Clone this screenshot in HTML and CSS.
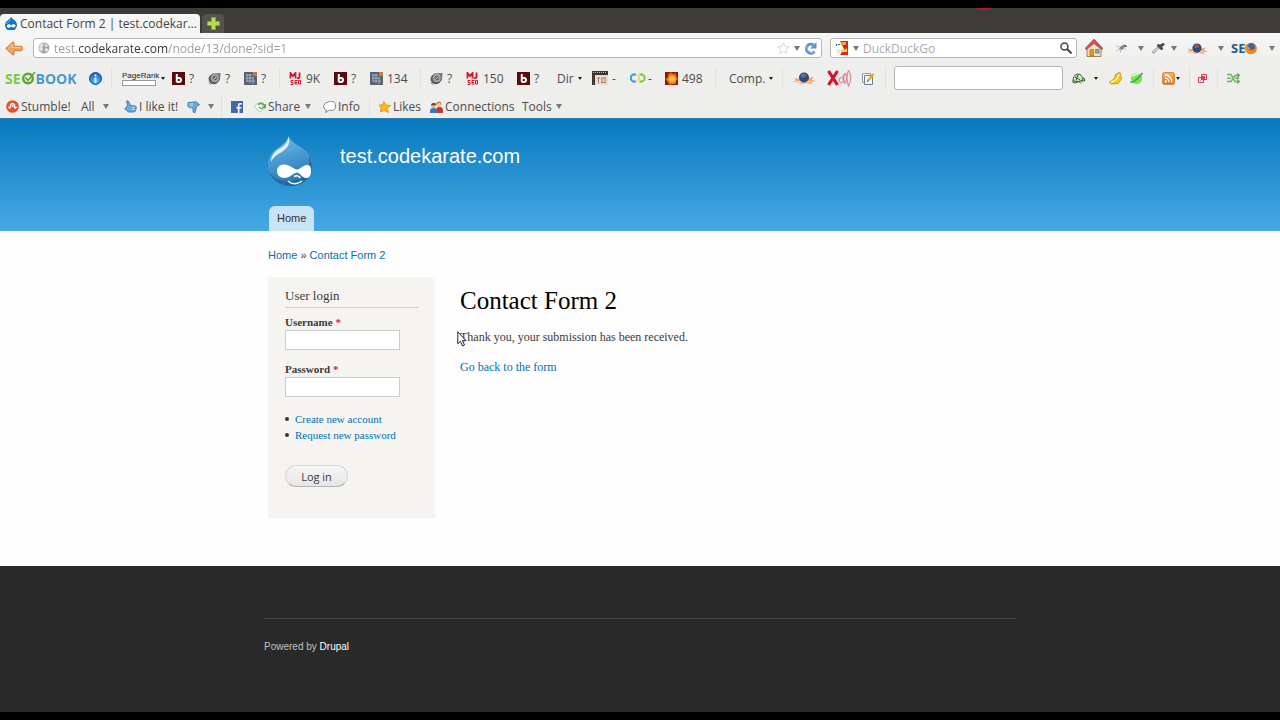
FILE: index.html
```html
<!DOCTYPE html>
<html lang="en">

<head>
    <meta charset="utf-8">
    <title>Contact Form 2 | test.codekarate.com</title>
    <meta name="viewport" content="width=device-width, initial-scale=1.0">
    <link rel="stylesheet" href="styles.css">
</head>

<body>
    <!-- shared icons -->
    <svg class="sprite" width="0" height="0" aria-hidden="true">
        <defs>
            <linearGradient id="dropFill" x1="0" y1="0" x2="0.3" y2="1">
                <stop offset="0" stop-color="#7fbfe9"/>
                <stop offset="0.5" stop-color="#4a9bd2"/>
                <stop offset="1" stop-color="#2a78b0"/>
            </linearGradient>
            <radialGradient id="infoFill" cx="0.5" cy="0.7" r="0.7">
                <stop offset="0" stop-color="#5fc0ff"/>
                <stop offset="1" stop-color="#1259c4"/>
            </radialGradient>
            <linearGradient id="orangeFill" x1="0" y1="0" x2="0" y2="1">
                <stop offset="0" stop-color="#f9b56b"/>
                <stop offset="1" stop-color="#df6a10"/>
            </linearGradient>
            <radialGradient id="sunFill" cx="0.55" cy="0.55" r="0.6">
                <stop offset="0" stop-color="#ffd84a"/>
                <stop offset="0.5" stop-color="#f0801a"/>
                <stop offset="1" stop-color="#c8300c"/>
            </radialGradient>
        </defs>
        <symbol id="b" viewBox="0 0 13 13">
            <rect width="13" height="13" fill="#5c0a0c"/>
            <path d="M4.800 2v8.200M4.800 6h2.200a2 2 0 0 1 0 4H4.800" fill="none" stroke="#fff" stroke-width="2"/>
        </symbol>
        <symbol id="sphere" viewBox="0 0 13 13">
            <path d="M4 1.500 12.500 1 12 8 9 11z" fill="#777"/>
            <circle cx="5.800" cy="7" r="5.300" fill="#5f5f5f"/>
            <circle cx="6.800" cy="6" r="4" fill="#a5a5a5"/>
            <circle cx="6.800" cy="6" r="2.300" fill="#666"/>
            <path d="M5.500 7.500 8.500 4.500" stroke="#ccc"/>
            <path d="M.500 10.500 3 12.500" stroke="#888"/>
        </symbol>
        <symbol id="grid" viewBox="0 0 13 13">
            <rect width="13" height="13" fill="#5a6470"/>
            <rect x="9" width="4" height="4" fill="#d9743a"/>
            <path d="M2 3h6M2 6h8M3 9h8M3 2v8M6 2v9M9 5v7" stroke="#a9c3d6" stroke-width=".8"/>
        </symbol>
        <symbol id="mj" viewBox="0 0 13 13">
            <path d="M1.500 6.500V1l2.500 3L6.500 1v5.500M10.500 .500v4.500q0 1.500-2.500 1" fill="none" stroke="#d0142c" stroke-width="1.800"/>
            <path d="M4.500 8.500H2v2h2v2H1.500M8.500 8.500H6v3.500h2.500M6 10.500h2M9.500 8.500h2v3.500h-2z" fill="none" stroke="#d0142c" stroke-width="1"/>
        </symbol>
        <symbol id="rocket" viewBox="0 0 24 14">
            <path d="M0 11 4 9.500 2 7 7 8 8 4h8l1 3 5-1-3 3 5 1-5 1 1 2-6-1-6 1 1-2-4 1 0-1.500z" fill="#f5a066"/>
            <path d="M4 10.500h15" stroke="#ffe0bd" stroke-width="1"/>
            <circle cx="12" cy="6.500" r="5" fill="#234f87"/>
            <circle cx="11" cy="4.500" r="2" fill="#4d7fb8"/>
            <circle cx="12.500" cy="4.500" r="1.800" fill="#c0502c"/>
        </symbol>
    </svg>

    <div class="browser">
        <div class="tab-strip">
            <button class="tab" type="button">
                <svg width="12" height="13" viewBox="0 0 12 13"><path d="M6 0c1 2 6 3.500 6 8a5 5 0 0 1-12 0c0-4 4.500-5 6-8z" fill="#1276b8"/><path d="M2 8.500c1.500-2 3-1 4 0 1-1 3-2 4.500-.500.500 1-1 3-2.500 2.500L6 9.500C4 12 1.500 10.500 2 8.500z" fill="#fff"/><path d="M5 2c1 2-2 3-4 5" fill="none" stroke="#7cc5ed"/></svg>
                <span>Contact Form 2 | test.codekar…</span>
            </button>
            <button class="new-tab" type="button" aria-label="New tab">
                <svg width="13" height="13" viewBox="0 0 13 13"><path d="M4.500.500h4v4h4v4h-4v4h-4v-4h-4v-4h4z" fill="#b4de4c" stroke="#7fae25"/></svg>
            </button>
            <span class="red-dash"></span>
        </div>

        <div class="nav-bar">
            <button class="tool back" type="button" aria-label="Back">
                <svg width="18" height="15" viewBox="0 0 18 15"><path d="M.800 7.500 8 .800 9 1.500v3.800h7.500q1 .200 1 2.200t-1 2.200H9v3.800l-1 .700z" fill="#f0a35c" stroke="#cf7a35"/><path d="M3 7.500 7.500 3.500v3H16" fill="none" stroke="#f8c99a"/></svg>
            </button>
            <div class="url-box">
                <svg width="12" height="12" viewBox="0 0 12 12"><circle cx="6" cy="6" r="5.500" fill="#a5a5a5"/><path d="M2 2.500 5 1l1 2-2 2 1 2-1.500 3L1 7zM7 1.500l3 1.500-1 2H7zM7 6l4 1-2 3-2-1z" fill="#e2e2e2"/></svg>
                <input class="url" type="text" value="test.codekarate.com/node/13/done?sid=1" aria-label="Address">
                <button class="tool" type="button" aria-label="Bookmark">
                    <svg width="13" height="12" viewBox="0 0 13 12"><path d="m6.500.800 1.700 3.700 4 .400-3 2.700.900 3.900-3.600-2-3.600 2 .900-3.900-3-2.700 4-.400z" fill="#fff" stroke="#d4d4d4"/></svg>
                </button>
                <span class="arrow"></span>
                <button class="tool" type="button" aria-label="Reload">
                    <svg width="13" height="13" viewBox="0 0 13 13"><path d="M10.500 9.500A4.500 4.500 0 1 1 9.500 3" fill="none" stroke="#6094c4" stroke-width="3"/><path d="M6 6.500h6.500V0z" fill="#6094c4"/><path d="M10 10A5 5 0 0 1 3 4" fill="none" stroke="#9fc4e4"/></svg>
                </button>
            </div>
            <div class="search-box">
                <svg width="14" height="14" viewBox="0 0 14 14"><rect width="14" height="14" rx="1" fill="#fff"/><path d="M5 0h8v14H5l4-6z" fill="#d42a1c"/><path d="M6 1h5v3H6z" fill="#f6a233"/><path d="M6 8q4 2 6-1v4H6z" fill="#ffd338"/><path d="M1 3h1v2H1zM3 3h2v1H3z" fill="#235c9b"/><path d="M1 8h4l1 4H2z" fill="#eee4d6"/></svg>
                <span class="arrow"></span>
                <input class="search" type="text" placeholder="DuckDuckGo" aria-label="Search">
                <button class="tool" type="button" aria-label="Go">
                    <svg width="12" height="12" viewBox="0 0 12 12"><circle cx="4.500" cy="4.500" r="3.500" fill="#fff" stroke="#444" stroke-width="1.500"/><path d="m7 7 4.500 4.500" stroke="#444" stroke-width="2"/></svg>
                </button>
            </div>
            <div class="nav-tools">
                <button class="tool" type="button" aria-label="Home page">
                    <svg width="18" height="18" viewBox="0 0 18 18"><path d="M2 8 9 2l7 6v9.500H2z" fill="#f1dfae" stroke="#9b8460"/><path d="M0 9.500 9 0l9 9.500-1.500 1L9 4.500l-7.500 6z" fill="#c95558" stroke="#a43a40" stroke-width=".6"/><path d="M5 10.500h3.500V17H5z" fill="#d79b2e" stroke="#8f6d2c" stroke-width=".6"/><path d="M10.500 10.500H14V14h-3.500z" fill="#7ea9cc" stroke="#666" stroke-width=".6"/></svg>
                </button>
                <button class="tool" type="button" aria-label="Firebug">
                    <svg width="13" height="11" viewBox="0 0 13 11"><path d="m1 3 5 1.500M5 6 1 8M6 7l-1 3M8 5l3 2" fill="none" stroke="#bbb"/><path d="m4 6 2-3 4-1.500 1 1.500-4 4z" fill="#888"/><path d="M9 2.500 12 3.500" stroke="#444"/></svg>
                </button>
                <span class="arrow"></span>
                <button class="tool" type="button" aria-label="Color picker">
                    <svg width="13" height="12" viewBox="0 0 13 12"><path d="M.500 11 7 5" stroke="#aaa" stroke-width="3"/><path d="M1.500 10 7 5" stroke="#eee"/><path d="m6.500 3.500 3 3M8.500 4l2.500-1.500" stroke="#4a4a4a" stroke-width="3" stroke-linecap="round"/></svg>
                </button>
                <span class="arrow"></span>
                <button class="tool" type="button" aria-label="Rank checker"><svg width="22" height="13"><use href="#rocket"/></svg></button>
                <span class="arrow"></span>
                <button class="tool seo-fox" type="button">SE<svg width="12" height="13" viewBox="0 0 13 13"><circle cx="6.500" cy="6.500" r="6.300" fill="#e27a1c"/><circle cx="7" cy="4.500" r="3.600" fill="#3767a8"/><path d="M0 5q1-3 2-3l1 3 3 1-2 2q4 3 7-1l1-4q1 9-5.500 9.500T0 5z" fill="#ef8a24"/></svg></button>
                <span class="arrow"></span>
            </div>
        </div>

        <div class="seo-bar">
            <button class="tool seo-book" type="button"><span class="green">SE</span><svg width="15" height="14" viewBox="0 0 15 14"><circle cx="7" cy="7.500" r="4.800" fill="none" stroke="#5da72f" stroke-width="2.400"/><path d="m4.500 6.500 2.500 3L14 1" fill="none" stroke="#5da72f" stroke-width="1.500"/></svg><span class="blue">BOOK</span></button>
            <button class="tool" type="button" aria-label="Info">
                <svg width="13" height="13" viewBox="0 0 13 13"><circle cx="6.500" cy="6.500" r="6" fill="url(#infoFill)" stroke="#154fae"/><path d="M6.500 2.500v1.800M6.500 5.500v5" stroke="#fff" stroke-width="1.800"/></svg>
            </button>
            <span class="sep"></span>
            <button class="tool page-rank" type="button"><span>PageRank</span><i class="dot-arrow"></i></button>
            <button class="tool" type="button"><svg width="13" height="13"><use href="#b"/></svg>?</button>
            <button class="tool" type="button"><svg width="13" height="13"><use href="#sphere"/></svg>?</button>
            <button class="tool" type="button"><svg width="13" height="13"><use href="#grid"/></svg>?</button>
            <span class="sep"></span>
            <button class="tool" type="button"><svg width="13" height="13"><use href="#mj"/></svg>9K</button>
            <button class="tool" type="button"><svg width="13" height="13"><use href="#b"/></svg>?</button>
            <button class="tool" type="button"><svg width="13" height="13"><use href="#grid"/></svg>134</button>
            <span class="sep"></span>
            <button class="tool" type="button"><svg width="13" height="13"><use href="#sphere"/></svg>?</button>
            <button class="tool" type="button"><svg width="13" height="13"><use href="#mj"/></svg>150</button>
            <button class="tool" type="button"><svg width="13" height="13"><use href="#b"/></svg>?</button>
            <button class="tool" type="button">Dir<i class="dot-arrow"></i></button>
            <button class="tool" type="button">
                <svg width="16" height="14" viewBox="0 0 16 14"><path d="M0 0h16v4H3v10H0z" fill="#3a3230"/><path d="M1 1.500h14" stroke="#c9b49c" stroke-dasharray="1 1"/><path d="M1.500 4v9" stroke="#8a4a40" stroke-dasharray="1 1"/><path d="M3 4h13v10H3z" fill="#e3ddce"/><path d="M5 7h3M6.500 7v5M9 7h5M10 7v4M13 7v5M9 11.500h5" fill="none" stroke="#b8766a"/></svg>-
            </button>
            <button class="tool tight" type="button">
                <svg width="16" height="10" viewBox="0 0 16 10"><path d="M6 1.800A3.600 3.600 0 1 0 6 8.200" fill="none" stroke="#3f9fd8" stroke-width="2"/><path d="M8 2 9.500 5 8 8" fill="none" stroke="#f2cf3a" stroke-width="1.200"/><path d="M9.500 1.800A3.600 3.600 0 1 1 9.500 8.200" fill="none" stroke="#8cc63f" stroke-width="2"/></svg>-
            </button>
            <button class="tool" type="button">
                <svg width="13" height="13" viewBox="0 0 13 13"><rect width="13" height="13" fill="#9c1408"/><path d="m6 0 2 2 3-1v3l2 3-2 2v3H8l-4 1-1-3-3-3 3-2 0-3z" fill="url(#sunFill)"/><circle cx="7" cy="7" r="3" fill="#ffc23a"/></svg>498
            </button>
            <span class="sep"></span>
            <button class="tool" type="button">Comp.<i class="dot-arrow"></i></button>
            <span class="sep"></span>
            <button class="tool" type="button" aria-label="Rank checker"><svg width="24" height="14"><use href="#rocket"/></svg></button>
            <button class="tool" type="button" aria-label="Nofollow">
                <svg width="25" height="18" viewBox="0 0 25 18"><path d="m1.500 2 9 14M10.500 2 1.500 16" stroke="#d8102a" stroke-width="3.200"/><path d="M15 8.500q-3 0-3 2.500t3 3M16 6v8M18 4q3.500 5 0 10.500q-2.500-5 0-10.500M21.500 1q4.500 7.500 0 16q-3-8 0-16" fill="none" stroke="#d98a9c" stroke-width="1.200"/></svg>
            </button>
            <button class="tool" type="button" aria-label="Edit">
                <svg width="13" height="13" viewBox="0 0 13 13"><path d="M.500 1.500h8v9h-8z" fill="#fff" stroke="#8a9aac"/><path d="M2.500 3.500h8v9h-8z" fill="#f4f7fb" stroke="#6a7f99"/><path d="m6 8.500 5.500-6.500" stroke="#e9a72c" stroke-width="2.500"/><path d="m5 10 1.300-2" stroke="#6a4a2a"/></svg>
            </button>
            <span class="sep"></span>
            <input class="keyword" type="text" aria-label="Keyword">
            <button class="tool wide" type="button" aria-label="Compare">
                <svg width="13" height="11" viewBox="0 0 13 11"><path d="M1 8q0-6 5-7 4 0 5 6L7 8.500z" fill="#d5e6cb" stroke="#2e5c2a"/><path d="M0 8.500 3 10l4-1.500 2 2M11 5q2.500 0 1.500 3H9M3 4l5 3M6 2 4 7" fill="none" stroke="#2e5c2a"/></svg><i class="dot-arrow"></i>
            </button>
            <button class="tool" type="button" aria-label="Highlight">
                <svg width="13" height="13" viewBox="0 0 13 13"><path d="M7 2 11 .500 12.500 7 9 11.500 2 12 .500 10 5 7z" fill="#f2c72a" stroke="#d19a12"/><path d="m2 10.500 6-3.500 2-5" fill="none" stroke="#fff0a0" stroke-width="1.500"/></svg>
            </button>
            <button class="tool" type="button" aria-label="Site">
                <svg width="13" height="13" viewBox="0 0 13 13"><circle cx="6.500" cy="6.500" r="5.500" fill="#7be04a"/><path d="M2.500 4.500q3-3.500 6-2" fill="none" stroke="#d6ffb8" stroke-width="2"/><path d="M.500 10q2 1 6-2.500T12.500 1" fill="none" stroke="#2ba55e" stroke-width="1.500"/></svg>
            </button>
            <span class="sep"></span>
            <button class="tool rss" type="button" aria-label="Feeds">
                <svg width="13" height="13" viewBox="0 0 13 13"><rect x=".5" y=".5" width="12" height="12" rx="2" fill="url(#orangeFill)" stroke="#d98840"/><circle cx="3.800" cy="9.500" r="1.200" fill="#fff"/><path d="M3 6a4 4 0 0 1 4 4.500M3 3a7 7 0 0 1 7 7.500" fill="none" stroke="#fff" stroke-width="1.400"/></svg><i class="dot-arrow"></i>
            </button>
            <span class="sep"></span>
            <button class="tool" type="button" aria-label="Open links">
                <svg width="9" height="9" viewBox="0 0 9 9"><path d="M3.500.500h5v5h-5zM.500 3.500h5v5h-5z" fill="#fbe4e8" stroke="#cf3c58"/><path d="m2.500 6.500 4-4M4 2.500h2.500V5" fill="none" stroke="#cf3c58"/></svg>
            </button>
            <span class="sep"></span>
            <button class="tool" type="button" aria-label="Shuffle">
                <svg width="13" height="11" viewBox="0 0 13 11"><path d="M0 1.500h4l4 7h4M0 8.500h4l4-6h4M10 .500l2.500 2L10 4.500M10 6.500l2.500 2-2.500 2M0 5.200h4M8 5.200h4" fill="none" stroke="#6bb562" stroke-width="1.500"/></svg>
            </button>
        </div>

        <div class="stumble-bar">
            <button class="tool tight" type="button">
                <svg width="13" height="13" viewBox="0 0 13 13"><circle cx="6.500" cy="6.500" r="6.300" fill="#e5502e"/><path d="M3 6.500v1q.700 1.300 1.500 0V5q2-3 4 0v2.500q.800 1.300 1.500 0v-1M6.500 5v2" fill="none" stroke="#fff" stroke-width="1.400"/></svg>Stumble!
            </button>
            <button class="tool menu" type="button">All<i class="arrow"></i></button>
            <button class="tool tight" type="button">
                <svg width="13" height="13" viewBox="0 0 13 13"><path d="M2.500 1q1.500-.700 2.500 1l1.500 3.500 5 .500q1.500 1 .500 2 .500 2-.500 2.500 0 1.500-1.500 1.500H4.500L.800 9 3.500 5.500z" fill="#6aa9dc" stroke="#39719f" stroke-width=".8"/><path d="M7.500 7.500h3.500M8 9.500h3" stroke="#b9dbf4"/></svg>I like it!
            </button>
            <button class="tool menu" type="button" aria-label="Dislike">
                <svg width="13" height="12" viewBox="0 0 13 12"><path d="M1 1.500 9 .800l3.500 2.700L9.500 6 8 11.500Q5.500 12 6 9.500V7L2 6.500Q0 5 1 3.500z" fill="#6aa9dc" stroke="#39719f" stroke-width=".8"/><path d="M2 3h4M3 5h3" stroke="#b9dbf4"/></svg><i class="arrow"></i>
            </button>
            <span class="sep"></span>
            <button class="tool" type="button" aria-label="Facebook">
                <svg width="12" height="12" viewBox="0 0 11 11"><rect width="11" height="11" fill="#4667a6"/><path d="M7 11V4q0-1.500 1.500-1.500H10M5 6.200h4.500" fill="none" stroke="#fff" stroke-width="1.500"/></svg>
            </button>
            <button class="tool tight share" type="button">
                <svg width="12" height="12" viewBox="0 0 12 12"><path d="M.500 5.500 3 2.500l6 1 0 5-3.500 2.500z" fill="#fff" stroke="#aaa" stroke-width=".8"/><path d="M4 4q3-4 6 0l1 2M11.500 3v3.500H8M5 6l3 2" fill="none" stroke="#4fae48" stroke-width="1.500"/></svg>Share<i class="arrow"></i>
            </button>
            <button class="tool tight" type="button">
                <svg width="13" height="12" viewBox="0 0 13 12"><path d="M2.500 11.500 3.500 9Q.500 8 .500 5T6.500.500t6 4.500-6 4z" fill="#fff" stroke="#8a8a8a"/></svg>Info
            </button>
            <span class="sep"></span>
            <button class="tool tight" type="button">
                <svg width="12" height="12" viewBox="0 0 12 12"><path d="m5 .500 2 3.500 4.500.500L8.500 7.500l1 4-4-2-4 1.500L2 7 0 4l3.500-.300z" fill="#fbb917" stroke="#e08c10" stroke-width=".7"/></svg>Likes
            </button>
            <button class="tool tight" type="button">
                <svg width="13" height="12" viewBox="0 0 13 12"><path d="M6 12V9q0-3 3.500-3T13 9v3z" fill="#c9352a"/><circle cx="8.800" cy="3.500" r="2.600" fill="#f2c196"/><path d="M6 3q1-3.500 5-2l.500 3-2-2z" fill="#d98b2b"/><path d="M0 12v-2q0-3 3.500-3T7 10v2z" fill="#3a76bf"/><circle cx="3.500" cy="4.800" r="2.400" fill="#eab07f"/><path d="M1 4.500Q1 1.500 4 2t2 2z" fill="#6b4225"/></svg>Connections
            </button>
            <button class="tool" type="button">Tools<i class="arrow"></i></button>
        </div>
    </div>

    <header class="site-header">
        <div class="container">
            <div class="branding">
                <svg class="logo" width="47" height="52" viewBox="0 0 47 52">
                    <path d="M20.500 0C23 6 28 8 34 12c6 4 11 9.500 11 17.500C45 42 35 50 22.500 50S0 41 0 29c0-8 4-13 9-16.500C14 9 19 6 20.500 0z" fill="url(#dropFill)"/>
                    <path d="M41 19c8 14-3 31-18 31C12 50 4 44 1 36c6 8 14 10 22 9 14-1 20-12 18-26z" fill="#1c5f92" opacity=".6"/>
                    <path d="M20.500 1C23 8 19 13 12 17c-5 3-7 5-9 9 0-6 3-10 8-13 5-3 8-5 9.500-12z" fill="#f0f9fe" opacity=".9"/>
                    <path d="M9 35c0-4 3-6.500 7-6.500 6 0 9 4.500 13 5 4-.500 6-4.500 10-4.500 3 0 4 2 4 6 0 4-1.500 7-4.500 7-4.500 0-6-5-9.500-5.500-4 .500-7 5.500-13 5.500-4 0-7-3-7-7z" fill="#fff"/>
                    <path d="M26 40.500q4-2 6.500 1.500M20 45q6 5.500 14 0" fill="none" stroke="#fff" stroke-width="1.500"/>
                </svg>
                <a class="site-name" href="#">test.codekarate.com</a>
            </div>
            <nav class="main-menu">
                <a href="#">Home</a>
            </nav>
        </div>
    </header>

    <div class="page">
        <div class="container">
            <div class="breadcrumb"><a href="#">Home</a> » <a href="#">Contact Form 2</a></div>
            <div class="columns">
                <aside class="sidebar">
                    <h2>User login</h2>
                    <form action="#" method="post">
                        <label for="username">Username <span class="required">*</span></label>
                        <input type="text" id="username" name="username">
                        <label for="password">Password <span class="required">*</span></label>
                        <input type="password" id="password" name="password">
                        <ul>
                            <li><a href="#">Create new account</a></li>
                            <li><a href="#">Request new password</a></li>
                        </ul>
                        <button class="submit" type="submit">Log in</button>
                    </form>
                </aside>
                <main class="content">
                    <h1>Contact Form 2</h1>
                    <p>Thank you, your submission has been received.
                        <svg class="cursor" width="10" height="16" viewBox="0 0 10 16"><path d="M.800.800v12l2.700-2.500L5.500 15l2-1-2-4.300H9z" fill="#fff" stroke="#222"/></svg>
                    </p>
                    <p><a href="#">Go back to the form</a></p>
                </main>
            </div>
        </div>
    </div>

    <footer class="site-footer">
        <div class="container">
            <p>Powered by <a href="#">Drupal</a></p>
        </div>
    </footer>
</body>
</html>
```
FILE: styles.css
```css
* {
    box-sizing: border-box;
}

body {
    margin: 0;
    min-height: 100vh;
    display: flex;
    flex-direction: column;
    background-color: #fdfdfd;
    border-top: 8px solid #000;
    border-bottom: 8px solid #000;
    font-family: "Liberation Serif", Georgia, serif;
    font-size: 12px;
    color: #3b3b3b;
}

.sprite {
    position: absolute;
}

svg {
    flex: none;
}

a {
    color: #0071b3;
    text-decoration: none;
}

/* browser toolbars */
.browser {
    background-color: #eeeeec;
    border-bottom: 1px solid #2a7db5;
    font-family: "Open Sans", "Noto Sans", sans-serif;
    color: #4c4c4c;
}

.tool {
    display: flex;
    align-items: center;
    gap: 4px;
    padding: 0;
    border: none;
    background: none;
    font: inherit;
    color: inherit;
    white-space: nowrap;
}

.tight {
    gap: 2px;
}

.menu {
    gap: 8px;
}

.share .arrow {
    margin-left: 3px;
}

.arrow {
    flex: none;
    width: 6px;
    border: solid transparent;
    border-width: 5px 3px 0;
    border-top-color: #777;
}

.dot-arrow {
    flex: none;
    width: 4px;
    border: solid transparent;
    border-width: 3px 2px 0;
    border-top-color: #222;
}

.sep {
    width: 1px;
    height: 20px;
    background-color: #e2e2e0;
}

.tab-strip {
    display: flex;
    align-items: flex-end;
    gap: 2px;
    height: 25px;
    background-color: #3c3b37;
}

.tab {
    display: flex;
    align-items: center;
    gap: 3px;
    width: 200px;
    height: 19px;
    padding: 0 5px;
    border: none;
    border-radius: 4px 4px 0 0;
    background-color: #f5f5f4;
    font: inherit;
    color: #444;
    white-space: nowrap;
}

.new-tab {
    display: flex;
    align-items: center;
    justify-content: center;
    width: 22px;
    height: 19px;
    padding: 0;
    border: none;
    border-radius: 4px 4px 0 0;
    background-color: #53524d;
}

.red-dash {
    align-self: flex-start;
    width: 14px;
    height: 2px;
    margin-left: auto;
    margin-right: 289px;
    background-color: #b01830;
}

.nav-bar {
    display: flex;
    align-items: center;
    gap: 8px;
    height: 30px;
    padding-left: 5px;
    background: linear-gradient(#f7f6f6, #eeeeec);
}

.back {
    width: 20px;
}

.url-box,
.search-box {
    display: flex;
    align-items: center;
    gap: 4px;
    height: 20px;
    padding: 0 4px;
    border: 1px solid #b5b5b3;
    border-radius: 3px;
    background-color: #fff;
}

.url-box {
    flex: 1;
}

.search-box {
    width: 247px;
}

.url,
.search {
    flex: 1;
    min-width: 0;
    padding: 0;
    border: none;
    outline: none;
    font: inherit;
    color: #999;
}

/* only the domain is dark */
.url {
    background: linear-gradient(90deg, #999 25px, #333 25px, #333 114px, #999 114px);
    -webkit-background-clip: text;
    background-clip: text;
    -webkit-text-fill-color: transparent;
}

.search::placeholder {
    color: #aaa;
}

.nav-tools {
    display: grid;
    grid-template-columns: 30px 23px 14px 19px 15px 32px 13px 38px 11px;
    align-items: center;
}

.seo-fox {
    gap: 0;
    font-weight: bold;
    font-size: 13px;
    color: #1f5a8c;
}

.seo-bar,
.stumble-bar {
    display: grid;
    align-items: center;
}

.seo-bar {
    grid-template-columns: 84px 22px 11px 50px 36px 36px 35px 10px 45px 36px 50px 10px 36px 51px 40px 35px 38px 35px 50px 14px 53px 10px 35px 35px 23px 9px 178px 37px 21px 23px 9px 27px 9px 19px 10px 1fr;
    height: 30px;
    padding-left: 5px;
}

.seo-book {
    gap: 0;
    font-weight: bold;
    font-size: 14px;
}

.green {
    color: #7ac943;
}

.blue {
    color: #4a9cc8;
}

.page-rank {
    gap: 2px;
    font-family: "Liberation Sans", Arial, sans-serif;
    font-size: 8px;
    color: #222;
}

.page-rank span {
    line-height: 9px;
}

.page-rank span::after {
    content: "";
    display: block;
    width: 32px;
    height: 4px;
    border: 1px solid #999;
    background-color: #fff;
}

.rss {
    gap: 1px;
}

.wide {
    gap: 9px;
}

.keyword {
    width: 169px;
    height: 24px;
    padding: 0 4px;
    border: 1px solid #b5b5b3;
    border-radius: 3px;
    background-color: #fff;
    font: inherit;
}

.stumble-bar {
    grid-template-columns: 75px 43px 63px 34px 10px 23px 69px 46px 10px 51px 92px 1fr;
    height: 25px;
    padding: 2px 0 0 6px;
}

/* site */
.container {
    width: 100%;
    max-width: 752px;
    margin: 0 auto;
}

.site-header {
    background: linear-gradient(#0779bf, #48a9e4);
    font-family: "Liberation Sans", Arial, sans-serif;
}

.site-header .container {
    padding: 17px 4px 0;
}

.branding {
    display: flex;
    gap: 25px;
    height: 70px;
}

.site-name {
    padding-top: 8px;
    font-size: 20px;
    line-height: 24px;
    color: #fffeff;
}

.main-menu {
    display: flex;
    padding-left: 1px;
}

.main-menu a {
    padding: 0 8px;
    border-radius: 6px 6px 0 0;
    background-color: #c8e3f5;
    font-size: 11px;
    line-height: 25px;
    color: #333;
}

.page .container {
    padding: 16px 4px 48px;
}

.breadcrumb {
    font-family: "Liberation Sans", Arial, sans-serif;
    font-size: 11px;
    line-height: 16px;
}

.columns {
    display: flex;
    gap: 25px;
    margin-top: 14px;
}

.sidebar {
    width: 167px;
    padding: 11px 16px 31px 17px;
    background-color: #f5f4f1;
}

.sidebar h2 {
    margin: 0 0 6px;
    padding-bottom: 3px;
    border-bottom: 1px solid #d3d3d0;
    font-size: 13px;
    font-weight: normal;
    line-height: 16px;
}

.sidebar label {
    display: block;
    font-size: 11px;
    font-weight: bold;
    line-height: 16px;
}

.required {
    color: #e0202a;
}

.sidebar input {
    display: block;
    width: 115px;
    height: 20px;
    margin-bottom: 11px;
    padding: 2px;
    border: 1px solid #ccc;
    background-color: #fff;
}

.sidebar ul {
    margin: 14px 0 22px;
    padding-left: 10px;
    font-size: 11px;
    line-height: 16px;
}

.sidebar li {
    list-style: none;
}

.sidebar li::before {
    content: "";
    float: left;
    width: 4px;
    height: 4px;
    margin: 6px 0 0 -10px;
    border-radius: 50%;
    background-color: #333;
}

.submit {
    display: block;
    width: 63px;
    height: 22px;
    padding: 0;
    border: 1px solid #d8d8d8;
    border-bottom-color: #b4b4b4;
    border-radius: 11px;
    background: linear-gradient(#f6f6f6, #e6e6e6);
    font-family: "Open Sans", "Noto Sans", sans-serif;
    font-size: 11px;
    color: #3a3a3a;
}

.content h1 {
    margin: 9px 0 13px;
    font-size: 25px;
    font-weight: normal;
    line-height: 30px;
    color: #000;
}

.content p {
    position: relative;
    margin: 0 0 14px;
    line-height: 16px;
}

.cursor {
    position: absolute;
    left: -3px;
    top: 2px;
}

.site-footer {
    flex: 1;
    background-color: #292929;
    font-family: "Liberation Sans", Arial, sans-serif;
    font-size: 10px;
    color: #c0c0c0;
}

.site-footer .container {
    padding-top: 52px;
}

.site-footer p {
    margin: 0;
    padding-top: 20px;
    border-top: 1px solid #434343;
    line-height: 16px;
}

.site-footer a {
    color: #fcfcfc;
}
```
